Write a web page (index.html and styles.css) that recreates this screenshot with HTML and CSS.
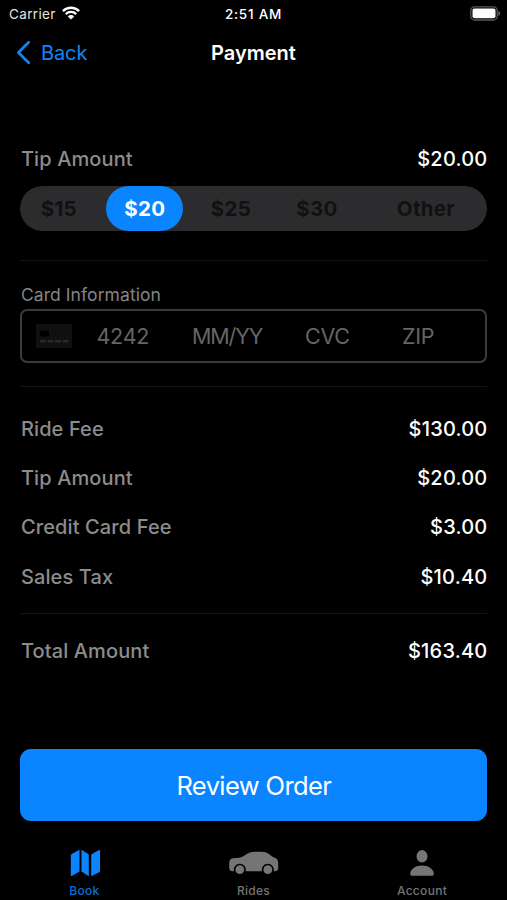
FILE: index.html
```html
<!DOCTYPE html>
<html lang="en">
<head>
<meta charset="utf-8">
<title>Payment</title>
<link rel="stylesheet" href="styles.css">
</head>
<body>
<div class="app">
  <header class="status">
    <div class="carrier"><span>Carrier</span>
      <svg class="wifi" viewBox="0 0 18 14" width="18" height="14"><g fill="none" stroke="#fff" stroke-width="2.3"><path d="M.9 5.1a11.5 11.5 0 0 1 16.2 0"/><path d="M3.8 8.1a7.4 7.4 0 0 1 10.4 0"/></g><path fill="#fff" d="M5.8 10.4a4.5 4.5 0 0 1 6.4 0L9 13.6z"/></svg>
    </div>
    <time class="time">2:51 AM</time>
    <svg class="battery" viewBox="0 0 31 15" width="31" height="15"><rect x=".8" y=".8" width="26.4" height="13.2" rx="3.8" fill="none" stroke="#5b5b5b" stroke-width="1.3"/><rect x="2.5" y="2.5" width="23" height="9.8" rx="2.1" fill="#fff"/><path fill="#666" d="M28.4 5v5q1.8-.8 1.8-2.5T28.4 5z"/></svg>
  </header>
  <nav class="nav">
    <a class="back"><svg viewBox="0 0 15 24" width="15" height="24"><path d="M12.7 1.3 2.4 11.5l10.3 10.2" fill="none" stroke="#1284f8" stroke-width="2.7" stroke-linecap="round" stroke-linejoin="round"/></svg><span>Back</span></a>
    <h1 class="title">Payment</h1>
  </nav>
  <main class="content">
    <div class="row tip"><span>Tip Amount</span><b>$20.00</b></div>
    <div class="segments">
      <button>$15</button><button class="selected">$20</button><button>$25</button><button>$30</button><button>Other</button>
    </div>
    <hr>
    <div class="card-label">Card Information</div>
    <div class="card-field">
      <svg class="card-icon" viewBox="0 0 36 24" width="36" height="24"><rect width="36" height="24" rx="2" fill="#101010"/><rect x="4" y="6.5" width="9" height="6" rx="1.5" fill="#000"/><path d="M4 17.3h29" stroke="#292929" stroke-width="2.4" stroke-dasharray="6 1.5"/></svg>
      <span class="number">4242</span><span class="expiry">MM/YY</span><span class="cvc">CVC</span><span class="zip">ZIP</span>
    </div>
    <hr>
    <div class="fees">
      <div class="row"><span>Ride Fee</span><b>$130.00</b></div>
      <div class="row"><span>Tip Amount</span><b>$20.00</b></div>
      <div class="row"><span>Credit Card Fee</span><b>$3.00</b></div>
      <div class="row"><span>Sales Tax</span><b>$10.40</b></div>
    </div>
    <hr>
    <div class="row total"><span>Total Amount</span><b>$163.40</b></div>
    <button class="review"><span>Review Order</span></button>
  </main>
  <footer class="tabs">
    <a class="tab active"><svg viewBox="0 0 52 28" width="52" height="28"><path d="M12.7 5 20.5.8v21.8l-7.7 4.5q-1 .4-1-.7V6.5q0-1 .9-1.5zM22.5.8l7.3 4.7v21.7l-7.3-4.6zM32.2 5.5 40 1q1-.4 1 .6v20.2q0 .9-.8 1.4l-8 4z"/></svg><span>Book</span></a>
    <a class="tab"><svg viewBox="0 0 52 28" width="52" height="28"><path d="M1.2 14Q1.2 10 5 9.3l6-.6q3-.4 5.5-2.2l3-2q3-1.8 6.5-1.8h8q4 0 7 2.3l3.5 2.7L48 9.3q2.2 1.2 2.2 4.7v5q0 3-3.2 3.3h-1.4a6 6 0 1 0-11.6 0H17.6a6 6 0 1 0-11.6 0H4.5Q1.2 22 1.2 19z"/><circle cx="11.8" cy="20.7" r="4.4"/><circle cx="39.8" cy="20.7" r="4.4"/></svg><span>Rides</span></a>
    <a class="tab"><svg viewBox="0 0 52 28" width="52" height="28"><ellipse cx="26" cy="7.3" rx="5.5" ry="6.2"/><path d="M16.5 26.8q-2.5 0-2.3-2.3c.6-4.4 5.3-7.9 11.8-7.9s11.2 3.5 11.8 7.9q.2 2.3-2.3 2.3z"/></svg><span>Account</span></a>
  </footer>
</div>
</body>
</html>
```
FILE: styles.css
```css
* { box-sizing: border-box; }
body { margin: 0; background: #000; color: #fff; font-family: Inter, "Liberation Sans", sans-serif; }
button { border: 0; margin: 0; padding: 0; background: none; font-family: inherit; }
svg { display: block; flex: none; }
.app { width: 507px; height: 900px; display: flex; flex-direction: column; overflow: hidden; }
.status { height: 27px; display: grid; grid-template-columns: 1fr auto 1fr; align-items: center; padding: 0 6px 0 9px; font-size: 13.5px; }
.carrier { display: flex; align-items: center; gap: 6px; color: #e4e4e4; letter-spacing: .35px; }
.wifi { margin-top: -2px; }
.time { font-weight: 500; letter-spacing: .75px; margin-right: 3px; }
.battery { justify-self: end; }
.nav { height: 50px; display: grid; grid-template-columns: 1fr auto 1fr; align-items: center; padding: 1px 16px 0; }
.back { display: flex; align-items: center; gap: 10px; color: #1284f8; font-size: 20px; letter-spacing: -.1px; }
.title { margin: 0; font-size: 20px; font-weight: 600; }
.content { height: 767px; padding: 57px 19.6px 0 20.4px; display: flex; flex-direction: column; }
.row { height: 49.3px; display: flex; align-items: center; justify-content: space-between; padding-left: .5px; color: #8c8c8c; font-size: 20px; font-weight: 500; letter-spacing: .12px; }
.row b { color: #fff; font-weight: 500; letter-spacing: .2px; }
.tip { height: 50px; }
.segments { height: 45px; margin-top: 2px; border-radius: 23px; background: #2c2c2e; display: grid; grid-template-columns: 77px 95px 77px 95px 123px; align-items: stretch; }
.segments button { font-size: 20.5px; font-weight: 700; color: #111; letter-spacing: .3px; }
.segments .selected { margin: 0 9px; border-radius: 23px; background: #0a84ff; color: #fff; }
hr { width: 100%; height: 1px; border: 0; margin: 29px 0 0; background: #141414; flex: none; }
.card-label { height: 20px; margin-top: 24px; padding-left: .5px; line-height: 20px; font-size: 17.5px; color: #858585; letter-spacing: .08px; }
.card-field { height: 54px; margin-top: 4px; border: 2px solid #3b3b3b; border-radius: 7px; padding-left: 14px; display: grid; grid-template-columns: 60px 95.5px 113px 97px auto; align-items: center; font-size: 21.5px; color: #656565; letter-spacing: -.2px; }
.expiry { letter-spacing: -1.1px; }
.card-field + hr { margin-top: 23px; }
.fees { padding-top: 17px; }
.fees + hr { margin-top: 12px; }
.total { margin-top: 12px; }
.review { height: 71.5px; margin-top: 74px; flex: none; border-radius: 11px; background: #0a84ff; color: #fff; font-size: 25.5px; letter-spacing: -.6px; }
.tabs { height: 56px; display: grid; grid-template-columns: repeat(3, 1fr); color: #757575; font-size: 12px; font-weight: 500; }
.tab { display: flex; flex-direction: column; align-items: center; padding-top: 5px; fill: currentColor; }
.tab:last-child { padding-right: 1px; }
.tab span { margin-top: 6px; line-height: 16px; letter-spacing: .3px; }
.active { color: #0a84ff; }
.active span { color: #0a6fd6; }
```
